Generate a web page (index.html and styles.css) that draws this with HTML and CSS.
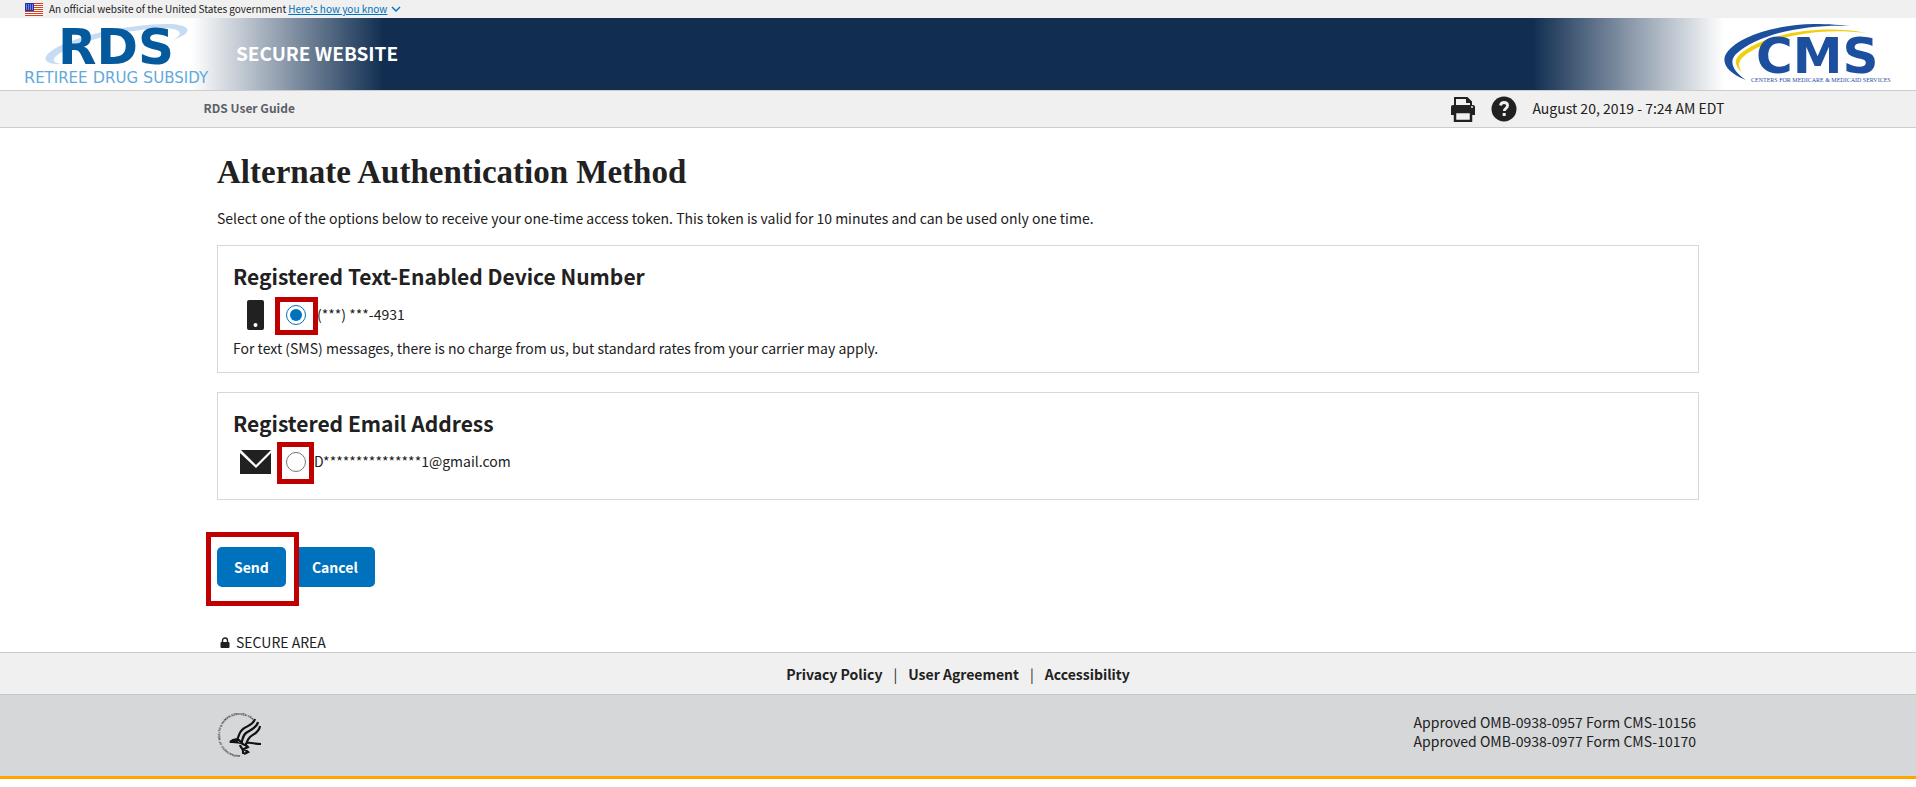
FILE: index.html
```
<!DOCTYPE html>
<html lang="en">
<head>
  <meta charset="UTF-8" />
  <meta name="viewport" content="width=device-width, initial-scale=1.0"/>
  <title>RDS Secure Website - Alternate Authentication Method</title>
  <link rel="stylesheet" href="styles.css">
</head>
<body>

<div class="gov-banner">
  <svg class="flag" viewBox="0 0 18 13" aria-hidden="true">
    <rect width="18" height="13" fill="#fff"/>
    <path d="M0 .5h18M0 2.5h18M0 4.5h18M0 6.5h18M0 8.5h18M0 10.5h18M0 12.5h18" stroke="#db3e1f"/>
    <rect width="9" height="8" fill="#1e33b1"/>
    <path d="M1 2h7M1 4h7M1 6h7" stroke="#fff" stroke-width=".8" stroke-dasharray="1 1"/>
  </svg>
  <span>An official website of the United States government</span>
  <a href="#">Here's how you know</a>
  <svg class="chevron" viewBox="0 0 10 6" aria-hidden="true"><path d="M1 1l4 4 4-4" fill="none" stroke="#0071bc" stroke-width="1.4"/></svg>
</div>

<header class="site-header">
  <a href="#" class="rds-logo" aria-label="RDS Retiree Drug Subsidy">
    <svg viewBox="0 0 190 72" width="190" height="72">
      <path d="M42 46C28 47 20 42 30 34 50 18 110 6 147 6c23 0 29 8 6 16 11-6 9-11-8-12C110 11 62 22 42 34c-12 7-10 11 0 12z" fill="#c6dcf3"/>
      <text class="rds-name" x="38" y="46">RDS</text>
      <text class="rds-sub" x="4" y="65">R<tspan class="sc">ETIREE</tspan> D<tspan class="sc">RUG</tspan> S<tspan class="sc">UBSIDY</tspan></text>
    </svg>
  </a>
  <span class="site-name">SECURE WEBSITE</span>
  <a href="#" class="cms-logo" aria-label="CMS Centers for Medicare and Medicaid Services">
    <svg viewBox="0 0 172 72" width="172" height="72">
      <path d="M26 62C10 56 2 47 5 38 14 18 60 6 94 6c14 0 28 1 38 2C90 6 40 14 16 36c-8 8-2 18 10 26z" fill="#1d4f9f"/>
      <path d="M22 55C13 46 14 40 24 33 48 16 100 6 146 15 100 9 54 18 28 35 18 42 17 47 22 55z" fill="#f0cf0c"/>
      <text class="cms-name" x="36" y="55">CMS</text>
      <text class="cms-sub" x="31" y="64">CENTERS FOR MEDICARE &amp; MEDICAID SERVICES</text>
    </svg>
  </a>
</header>

<div class="toolbar">
  <div class="toolbar-inner">
    <a href="#" class="guide-link">RDS User Guide</a>
    <div class="tools">
      <button type="button" class="icon-btn" aria-label="Print">
        <svg viewBox="0 0 26 26" width="26" height="26">
          <path d="M5 10V2h12l4 4v4" fill="#f0f0f0" stroke="#212121" stroke-width="2"/>
          <path d="M16 1v6h6z" fill="#212121"/>
          <path d="M3 9h20a2 2 0 0 1 2 2v8H1v-8a2 2 0 0 1 2-2z" fill="#212121"/>
          <path d="M5 16h16v9H5z" fill="#f0f0f0" stroke="#212121" stroke-width="2.500"/>
          <circle cx="22" cy="11" r="1" fill="#f0f0f0"/>
        </svg>
      </button>
      <button type="button" class="icon-btn" aria-label="Help">
        <svg viewBox="0 0 26 26" width="26" height="26">
          <circle cx="13" cy="13" r="12.500" fill="#212121"/>
          <path d="M9.500 9.500c.4-2 1.600-3 3.500-3 2.200 0 3.600 1.200 3.600 3.100 0 2.700-3.300 2.700-3.300 5.400" fill="none" stroke="#f0f0f0" stroke-width="2.800"/>
          <rect x="11.700" y="17" width="3" height="3" fill="#f0f0f0"/>
        </svg>
      </button>
      <span class="date">August 20, 2019 - 7:24 AM EDT</span>
    </div>
  </div>
</div>

<main class="container">
  <h1>Alternate Authentication Method</h1>
  <p class="description">Select one of the options below to receive your one-time access token. This token is valid for 10 minutes and can be used only one time.</p>

  <form>
    <section class="card">
      <h2>Registered Text-Enabled Device Number</h2>
      <div class="option">
        <svg class="option-icon" viewBox="0 0 32 32" aria-hidden="true">
          <rect x="7" y="1" width="17" height="30" rx="2" fill="#212121"/>
          <circle cx="15.500" cy="26" r="2" fill="#fff"/>
        </svg>
        <span class="radio-wrap mark-wide"><input type="radio" name="method" id="sms" checked></span>
        <label for="sms">(***) ***-4931</label>
      </div>
      <p class="hint">For text (SMS) messages, there is no charge from us, but standard rates from your carrier may apply.</p>
    </section>

    <section class="card">
      <h2>Registered Email Address</h2>
      <div class="option">
        <svg class="option-icon" viewBox="0 0 32 32" aria-hidden="true">
          <path d="M1 4h30L16 19z" fill="#212121"/>
          <path d="M0 7l16 15L31 7v21H0z" fill="#212121"/>
        </svg>
        <span class="radio-wrap mark-tall"><input type="radio" name="method" id="email"></span>
        <label for="email">D***************1@gmail.com</label>
      </div>
    </section>

    <div class="actions">
      <span class="send-wrap"><button type="button" class="btn">Send</button></span>
      <button type="button" class="btn">Cancel</button>
    </div>
  </form>

  <div class="secure">
    <svg viewBox="0 0 10 11" width="10" height="11" aria-hidden="true">
      <path d="M2.500 5V3.500a2.500 2.500 0 0 1 5 0V5" fill="none" stroke="#212121" stroke-width="1.400"/>
      <rect x=".5" y="5" width="9" height="6" rx="1" fill="#212121"/>
    </svg>
    <span>SECURE AREA</span>
  </div>
</main>

<footer>
  <nav class="footer-nav">
    <a href="#">Privacy Policy</a>
    <span>|</span>
    <a href="#">User Agreement</a>
    <span>|</span>
    <a href="#">Accessibility</a>
  </nav>
  <div class="footer-bottom">
    <div class="footer-inner">
      <svg class="hhs" viewBox="1 2 46 46" role="img" aria-label="Department of Health and Human Services USA">
        <path id="ring" d="M24 44C12 44 4 35 4 24S12 4 23 4c6 0 11 2 15 7" fill="none"/>
        <text class="hhs-ring"><textPath href="#ring">DEPARTMENT OF HEALTH &amp; HUMAN SERVICES USA</textPath></text>
        <g fill="none" stroke="#111" stroke-width="2.200">
          <path d="M39 8c-2 6-8 7-12 10-5 4-4 9-7 13"/>
          <path d="M42 11c-1 6-8 8-12 11-4 3-3 7-5 11"/>
          <path d="M44 15c-1 7-7 8-10 11-3 3-3 6-5 9"/>
          <path d="M14 31c4-3 8-4 11 0 2 4 5 2 7 5l-4 2 4 3-4 2"/>
          <path d="M24 34c1 4 4 3 3 9M31 32c4-1 7 1 14 1"/>
        </g>
        <path d="M13 32c4-4 9-3 12 1-4-1-8-1-12-1z" fill="#111"/>
      </svg>
      <p>Approved OMB-0938-0957 Form CMS-10156<br>Approved OMB-0938-0977 Form CMS-10170</p>
    </div>
  </div>
</footer>

</body>
</html>
```

FILE: styles.css
```
* {
  box-sizing: border-box;
}

body {
  font-family: 'Noto Sans CJK SC', 'Open Sans', sans-serif;
  font-size: 14px;
  line-height: 20px;
  margin: 0;
  background-color: #fff;
  color: #212121;
}

.gov-banner {
  display: flex;
  align-items: center;
  gap: 2px;
  height: 18px;
  padding: 0 25px;
  background-color: #f0f0f0;
  font-size: 10px;
  line-height: 16px;
}

.gov-banner .flag {
  width: 18px;
  height: 13px;
  margin-right: 4px;
}

.gov-banner a {
  color: #0071bc;
}

.gov-banner .chevron {
  width: 10px;
  height: 6px;
  margin-left: 2px;
}

.site-header {
  display: flex;
  align-items: center;
  padding: 0 24px 0 20px;
  background: linear-gradient(to right, #fff 10%, #112e51 20%, #112e51 80%, #fff 90%);
  border-bottom: 1px solid #ccc;
}

.site-header svg,
.icon-btn svg {
  display: block;
}

.rds-name {
  font: bold 50px 'DejaVu Sans', sans-serif;
  fill: #045a9c;
}

.rds-sub {
  font: 16px 'DejaVu Sans', sans-serif;
  fill: #62a8dc;
}

.rds-sub .sc {
  font-size: 15px;
}

.site-name {
  margin-left: 26px;
  padding-bottom: 2px;
  color: #fff;
  font-size: 19px;
  font-weight: bold;
}

.cms-logo {
  margin-left: auto;
}

.cms-name {
  font: bold 50px 'DejaVu Sans', sans-serif;
  fill: #1d4f9f;
}

.cms-sub {
  font: 6px 'Liberation Serif', serif;
  fill: #1d4f9f;
}

.toolbar {
  background-color: #f0f0f0;
  border-bottom: 1px solid #ccc;
}

.toolbar-inner {
  display: flex;
  justify-content: space-between;
  align-items: center;
  width: 80%;
  height: 36px;
  margin: 0 auto;
  padding-left: 12px;
}

.guide-link {
  padding-bottom: 2px;
  color: #5b616b;
  font-size: 12px;
  font-weight: bold;
  text-decoration: none;
}

.tools {
  display: flex;
  align-items: center;
  gap: 15px;
}

.icon-btn {
  padding: 0;
  border: none;
  background: none;
  cursor: pointer;
}

.date {
  padding-bottom: 2px;
}

.container {
  max-width: 1482px;
  margin: 0 auto;
}

h1 {
  margin: 0;
  padding-top: 24px;
  font-family: 'Liberation Serif', serif;
  font-size: 33px;
  line-height: 40px;
}

.description {
  margin: 16px 0 17px;
}

.card {
  margin-bottom: 19px;
  padding: 15px 15px 14px;
  border: 1px solid #d6d7d9;
}

h2 {
  margin: 0;
  font-size: 21px;
  line-height: 30px;
}

.option {
  display: flex;
  align-items: center;
  height: 47px;
  padding-left: 7px;
}

.option label {
  padding-bottom: 2px;
}

.option-icon {
  width: 32px;
  height: 32px;
  margin-right: 14px;
}

.radio-wrap {
  position: relative;
  display: flex;
  margin-right: 11px;
}

input[type="radio"] {
  width: 20px;
  height: 20px;
  margin: 0;
  accent-color: #0071bc;
}

/* red call-outs over the controls */
.radio-wrap::after,
.send-wrap::after {
  content: "";
  position: absolute;
  border: 5px solid #c00000;
  pointer-events: none;
}

.mark-wide::after {
  inset: -8px -12px -10px -11px;
}

.mark-tall {
  margin-right: 8px;
}

.mark-tall::after {
  inset: -10px -8px -12px -9px;
}

.hint {
  margin: 0;
}

.actions {
  display: flex;
  gap: 9px;
  margin-top: 47px;
}

.send-wrap {
  position: relative;
}

.send-wrap::after {
  inset: -15px -13px -19px -11px;
}

.btn {
  display: block;
  height: 40px;
  padding: 0 17px;
  border: none;
  border-radius: 5px;
  background-color: #0071bc;
  color: #fff;
  font-family: inherit;
  font-size: 14px;
  font-weight: bold;
  cursor: pointer;
}

.secure {
  display: flex;
  align-items: center;
  gap: 6px;
  margin-top: 45px;
  padding-left: 3px;
}

.footer-nav {
  display: flex;
  justify-content: center;
  align-items: center;
  gap: 11px;
  height: 43px;
  background-color: #f0f0f0;
  border-top: 1px solid #ccc;
  border-bottom: 1px solid #c6c7c9;
}

.footer-nav a {
  color: #212121;
  font-weight: bold;
  text-decoration: none;
}

.footer-bottom {
  background-color: #d6d7d9;
  border-bottom: 3px solid #ffa500;
}

.footer-inner {
  display: flex;
  justify-content: space-between;
  align-items: flex-start;
  max-width: 1482px;
  margin: 0 auto;
  padding: 18px 3px 17px 0;
}

.footer-inner p {
  margin: 0;
  line-height: 19px;
}

.hhs {
  width: 46px;
  height: 46px;
}

.hhs-ring {
  font: bold 3px 'Liberation Sans', sans-serif;
  fill: #212121;
}
```
